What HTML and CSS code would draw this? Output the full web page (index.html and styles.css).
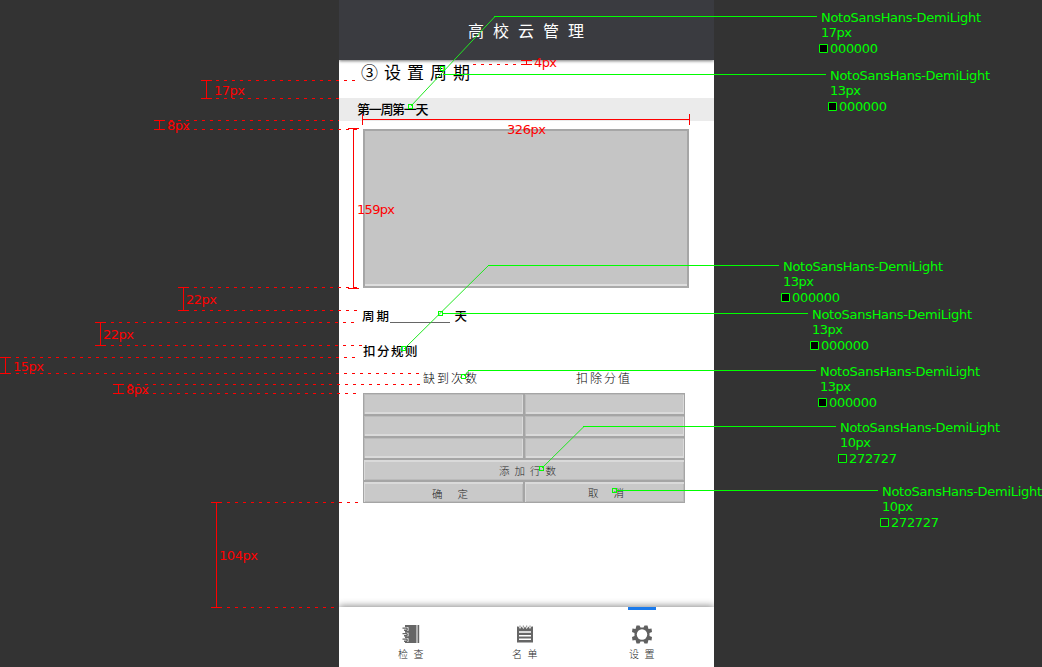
FILE: index.html
```html
<!DOCTYPE html>
<html lang="zh-CN">
<head>
<meta charset="utf-8">
<title>高校云管理</title>
<link rel="stylesheet" href="styles.css">
</head>
<body>
<main class="board">
  <section class="phone">
    <header class="header">高校云管理</header>
    <div class="content">
      <h1 class="step">③设置周期</h1>
      <div class="day-bar">第一周第一天</div>
      <div class="panel"></div>
      <div class="period"><span class="period-label">周期</span><span class="blank"></span><span>天</span></div>
      <div class="rule">扣分规则</div>
      <div class="columns"><span>缺到次数</span><span>扣除分值</span></div>
      <div class="table">
        <div class="cell"></div><div class="cell"></div>
        <div class="cell"></div><div class="cell"></div>
        <div class="cell"></div><div class="cell"></div>
        <div class="cell wide raised add">添加行数</div>
        <div class="cell raised ok">确定</div><div class="cell raised cancel">取消</div>
      </div>
    </div>
    <nav class="tabs">
      <div class="tab check">
        <svg width="18" height="19" viewBox="0 0 18 19"><path fill="#666" d="M3 0h11.500v18H3zM15.500 0h1.700v18h-1.700z"/><g fill="none" stroke="#fff" stroke-width="3.600"><path d="M2 4h4.500M2 9.500h4.500M2 15h4.500"/></g><g fill="none" stroke="#666" stroke-width="1.400"><path d="M.5 3.100h4q1.500 1.200 0 2.200H2M.5 8.600h4q1.500 1.200 0 2.200H2M.5 14.100h4q1.500 1.200 0 2.200H2"/></g></svg>
        <span>检查</span>
      </div>
      <div class="tab list">
        <svg width="18" height="19" viewBox="0 0 18 19"><path fill="#666" d="M1 1.500h1.500L4 4l1.700-2.500L7.300 4 9 1.500 10.700 4l1.700-2.500L14 4l1.500-2.500H17V17.500H1z"/><path d="M4 .5v2M7.300.5v2M10.700.5v2M14 .5v2" stroke="#888"/><path d="M3 7h12M3 10.700h12M3 14.300h12" stroke="#fff" stroke-width="1.400"/></svg>
        <span>名单</span>
      </div>
      <div class="tab settings active">
        <svg width="20" height="19" viewBox="-10 -9.5 20 19"><path fill="#606060" d="M-5.500-9h3l1 2h3l1-2h3l1 3.500 3-.5 .5 3.500-2.500 1v3l2.500 1-.5 3.500-3-.5-1 3.500h-3l-1-2h-3l-1 2h-3l-1-3.500-3 .5-.5-3.500 2.500-1v-3l-2.500-1 .5-3.500 3 .5z"/><circle r="5.200" fill="#fff"/></svg>
        <span>设置</span>
      </div>
    </nav>
  </section>
  <svg class="notes" width="1042" height="667" viewBox="0 0 1042 667">
    <g class="dash">
      <path d="M216 80.500H358"/><path d="M216 98.500H339"/><path d="M170 120.500H339"/><path d="M170 129.500H358"/><path d="M194 287.500H358"/><path d="M194 310.500H358"/><path d="M111 322.500H358"/><path d="M111 345.500H362"/><path d="M16 357.500H358"/><path d="M16 373.500H421"/><path d="M129 384.500H421"/><path d="M129 393.500H358"/><path d="M227 502.500H358"/><path d="M227 607.500H339"/><path d="M473 64.500H521"/>
    </g>
    <g class="measure">
      <path d="M201 80.500h11M201 98.500h11M206.500 80v19M154 120.500h11M154 129.500h11M159.500 120v10M178 287.500h11M178 310.500h11M183.500 287v24M95 322.500h11M95 345.500h11M100.500 322v24M0 357.500h11M0 373.500h11M5.500 357v17M113 384.500h11M113 393.500h11M118.500 384v10M211 502.500h11M211 607.500h11M216.500 502v106M521 60.500h11M521 64.500h11M526.500 60v5"/>
      <path d="M348 128.500h11M348 288.500h11M353.500 128v161M362.500 114v11M689.500 114v11M362 119.500h328"/>
    </g>
    <g class="red">
      <text x="214" y="95" textLength="31">17px</text>
      <text x="167" y="130" textLength="23">8px</text>
      <text x="534" y="67" textLength="23">4px</text>
      <text x="507" y="134" textLength="39">326px</text>
      <text x="357" y="214" textLength="38">159px</text>
      <text x="186" y="304" textLength="31">22px</text>
      <text x="103" y="339" textLength="31">22px</text>
      <text x="13" y="371" textLength="31">15px</text>
      <text x="126" y="394" textLength="23">8px</text>
      <text x="219" y="560" textLength="39">104px</text>
    </g>
    <g class="leader">
      <path class="slant" d="M411 106L495 16.500M404 349L488.500 265.500M464 376L469 370.500M542 468L584 426.500"/>
      <path d="M494 16.500H817M443 74.500H826M443 313.500H808M468 370.500H816M583 426.500H836M617 490.500H878"/>
      <path class="fine" d="M488 265.500H779"/>
      <path d="M408.500 104.500h4v4h-4zM440.500 66.500h4v4h-4zM438.500 311.500h4v4h-4zM401.500 346.500h4v4h-4zM461.500 374.500h4v4h-4zM539.500 466.500h4v4h-4zM612.500 488.500h4v4h-4z"/>
    </g>
    <g class="green">
      <text x="821" y="22" textLength="160">NotoSansHans-DemiLight</text><text x="821" y="37" textLength="31">17px</text><text x="830" y="53" textLength="48">000000</text>
      <text x="830" y="80" textLength="160">NotoSansHans-DemiLight</text><text x="830" y="95" textLength="31">13px</text><text x="839" y="111" textLength="48">000000</text>
      <text x="783" y="271" textLength="160">NotoSansHans-DemiLight</text><text x="783" y="286" textLength="31">13px</text><text x="792" y="302" textLength="48">000000</text>
      <text x="812" y="319" textLength="160">NotoSansHans-DemiLight</text><text x="812" y="334" textLength="31">13px</text><text x="821" y="350" textLength="48">000000</text>
      <text x="820" y="376" textLength="160">NotoSansHans-DemiLight</text><text x="820" y="391" textLength="31">13px</text><text x="829" y="407" textLength="48">000000</text>
      <text x="840" y="432" textLength="160">NotoSansHans-DemiLight</text><text x="840" y="447" textLength="31">10px</text><text x="849" y="463" textLength="48">272727</text>
      <text x="882" y="496" textLength="160">NotoSansHans-DemiLight</text><text x="882" y="511" textLength="31">10px</text><text x="891" y="527" textLength="48">272727</text>
    </g>
    <g class="swatch">
      <path fill="#000" d="M819.500 44.500h8v8h-8zM828.500 102.500h8v8h-8zM781.500 293.500h8v8h-8zM810.500 341.500h8v8h-8zM818.500 398.500h8v8h-8z"/>
      <path fill="#272727" d="M838.500 454.500h8v8h-8zM880.500 518.500h8v8h-8z"/>
    </g>
  </svg>
</main>
</body>
</html>
```
FILE: styles.css
```css
* { box-sizing: border-box; }
body { margin: 0; background: #333; overflow: hidden; }
.board { position: relative; width: 1042px; height: 667px; display: flex; justify-content: center; padding-left: 11px; }
.phone { width: 375px; height: 667px; display: flex; flex-direction: column; background: #fff; color: #000; font: 300 13px/20px "Noto Sans CJK SC", sans-serif; overflow: hidden; }
.header { flex: none; height: 60px; padding-left: 129px; background: #3a3b40; color: #fff; font-size: 16px; font-weight: 400; line-height: 60px; letter-spacing: 9px; box-shadow: 0 1px 3px #0008; white-space: nowrap; }
.content { flex: 1; }
.step { margin: 0; height: 38px; padding-left: 22px; font-size: 17px; font-weight: 400; line-height: 24px; letter-spacing: 6px; }
.day-bar { height: 23px; padding-left: 18px; background: #ebebeb; font-weight: 500; line-height: 22px; letter-spacing: -1.3px; }
.panel { width: 326px; height: 159px; margin: 8px 0 0 24px; background: #c5c5c5; border: 2px solid #a6a6a6; border-bottom-color: #aaa; box-shadow: inset 0 -2px #dedede; }
.period { display: flex; height: 24px; margin-top: 18px; padding-left: 23px; font-size: 12.5px; font-weight: 500; line-height: 20px; }
.period-label { width: 28px; letter-spacing: 2px; white-space: nowrap; }
.blank { width: 60px; height: 17px; margin-right: 4.5px; border-bottom: 1px solid #666; }
.rule { height: 20px; margin: 11px 0 0 24px; font-size: 12.5px; font-weight: 500; letter-spacing: 1.5px; }
.columns { display: flex; gap: 97px; height: 20px; margin: 7px 0 5px 84px; font-size: 12px; letter-spacing: 2px; }
.table { display: grid; grid-template-columns: 161px 161px; grid-auto-rows: 22px; width: 322px; margin-left: 24px; background: #c9c9c9; font-size: 10.5px; color: #272727; }
.cell { border: 1px solid #a5a5a5; box-shadow: inset 1px 1px #bbb, inset -1px -2px #dadada; }
.raised { box-shadow: inset 1px 2px #dadada, inset -1px -1px #bbb; }
.wide { grid-column: span 2; }
.add { padding-left: 135px; padding-top: 1px; letter-spacing: 5px; }
.ok { padding: 2px 0 0 68px; letter-spacing: 15px; }
.cancel { padding: 1px 0 0 63px; letter-spacing: 15px; }
.tabs { position: relative; flex: none; display: flex; height: 60px; background: #fff; font-size: 10px; color: #272727; box-shadow: 0 -1px 7px #0007; }
.tab { display: flex; flex-direction: column; align-items: center; width: 28px; padding-top: 18px; }
.tab span { width: 28px; letter-spacing: 5.5px; line-height: 20px; white-space: nowrap; }
.check { margin-left: 59px; padding-right: 2px; }
.check span { width: 28px; margin-right: -2px; }
.list { margin-left: 85px; }
.list span { padding-left: 1px; }
.settings { margin-left: 89px; }
.tab.active { border-top: 3px solid #1b7aeb; padding-top: 15px; }
.tab.active span { padding-left: 1px; }
.notes { position: absolute; inset: 0; font: 13px "DejaVu Sans", sans-serif; }
.dash, .measure { fill: none; stroke: #f00; shape-rendering: crispEdges; }
.dash { stroke-dasharray: 3 5; }
.red { fill: #f00; }
.green { fill: #0f0; }
.leader { fill: none; stroke: #0f0; shape-rendering: crispEdges; }
.slant { stroke: #20e820; shape-rendering: auto; }
.swatch { stroke: #0f0; }
```
